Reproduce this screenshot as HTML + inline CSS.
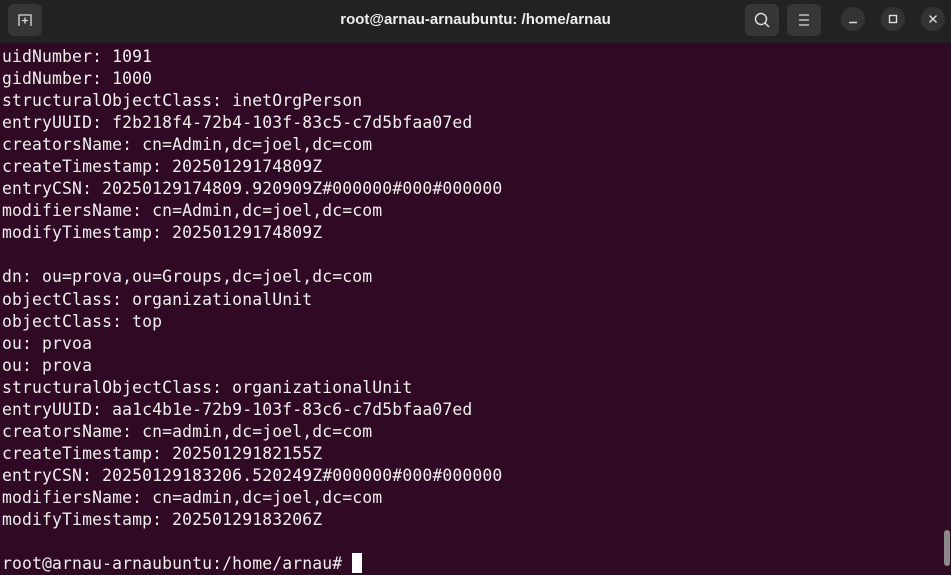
<!DOCTYPE html>
<html><head><style>
body{margin:0;width:951px;height:575px;overflow:hidden;background:#300a24;font-family:"Liberation Sans",sans-serif}
.tb{position:absolute;left:0;top:0;width:951px;height:43px;background:#222222}
.btn{position:absolute;top:4px;width:34px;height:32px;background:#363636;border-radius:6px}
.c{position:absolute;top:7px;width:24px;height:24px;border-radius:50%;background:#333}
.title{position:absolute;top:0;left:0;width:951px;text-align:center;line-height:40px;color:#eee;font-weight:bold;font-size:15px}
pre{position:absolute;left:2px;top:46px;margin:0;font-family:"DejaVu Sans Mono","Liberation Mono",monospace;font-size:16.4px;line-height:22.05px;color:#eeeeec;letter-spacing:0.14px}
.cur{display:inline-block;width:10px;height:20px;background:#fff;vertical-align:-4px}
.sb{position:absolute;left:944px;top:530px;width:6px;height:36px;background:#8a8a8a;border-radius:3px}
</style></head><body>
<div class="tb">
<div class="btn" style="left:8px"><svg width="34" height="32"><path d="M11 22V11h12v11" fill="none" stroke="#ddd" stroke-width="1.3"/><path d="M17 13.5v6M14 16.5h6" stroke="#ddd" stroke-width="1.3"/></svg></div>
<div class="title">root@arnau-arnaubuntu: /home/arnau</div>
<div class="btn" style="left:745px"><svg width="34" height="32"><circle cx="16" cy="15" r="5.5" fill="none" stroke="#ddd" stroke-width="1.5"/><path d="M20 19l4 4" stroke="#ddd" stroke-width="1.5"/></svg></div>
<div class="btn" style="left:787px"><svg width="34" height="32"><path d="M12 11h10M12 16h10M12 21h10" stroke="#ddd" stroke-width="1.3"/></svg></div>
<div class="c" style="left:841px"><svg width="24" height="24"><path d="M8 15.5h8" stroke="#ddd" stroke-width="1.5"/></svg></div>
<div class="c" style="left:881px"><svg width="24" height="24"><rect x="8.5" y="8.5" width="7" height="7" fill="none" stroke="#ddd" stroke-width="1.4"/></svg></div>
<div class="c" style="left:921px"><svg width="24" height="24"><path d="M8.5 8.5l7 7M15.5 8.5l-7 7" stroke="#ddd" stroke-width="1.4"/></svg></div>
</div>
<pre>uidNumber: 1091
gidNumber: 1000
structuralObjectClass: inetOrgPerson
entryUUID: f2b218f4-72b4-103f-83c5-c7d5bfaa07ed
creatorsName: cn=Admin,dc=joel,dc=com
createTimestamp: 20250129174809Z
entryCSN: 20250129174809.920909Z#000000#000#000000
modifiersName: cn=Admin,dc=joel,dc=com
modifyTimestamp: 20250129174809Z

dn: ou=prova,ou=Groups,dc=joel,dc=com
objectClass: organizationalUnit
objectClass: top
ou: prvoa
ou: prova
structuralObjectClass: organizationalUnit
entryUUID: aa1c4b1e-72b9-103f-83c6-c7d5bfaa07ed
creatorsName: cn=admin,dc=joel,dc=com
createTimestamp: 20250129182155Z
entryCSN: 20250129183206.520249Z#000000#000#000000
modifiersName: cn=admin,dc=joel,dc=com
modifyTimestamp: 20250129183206Z

root@arnau-arnaubuntu:/home/arnau# <span class="cur"></span></pre>
<div class="sb"></div>
</body></html>
